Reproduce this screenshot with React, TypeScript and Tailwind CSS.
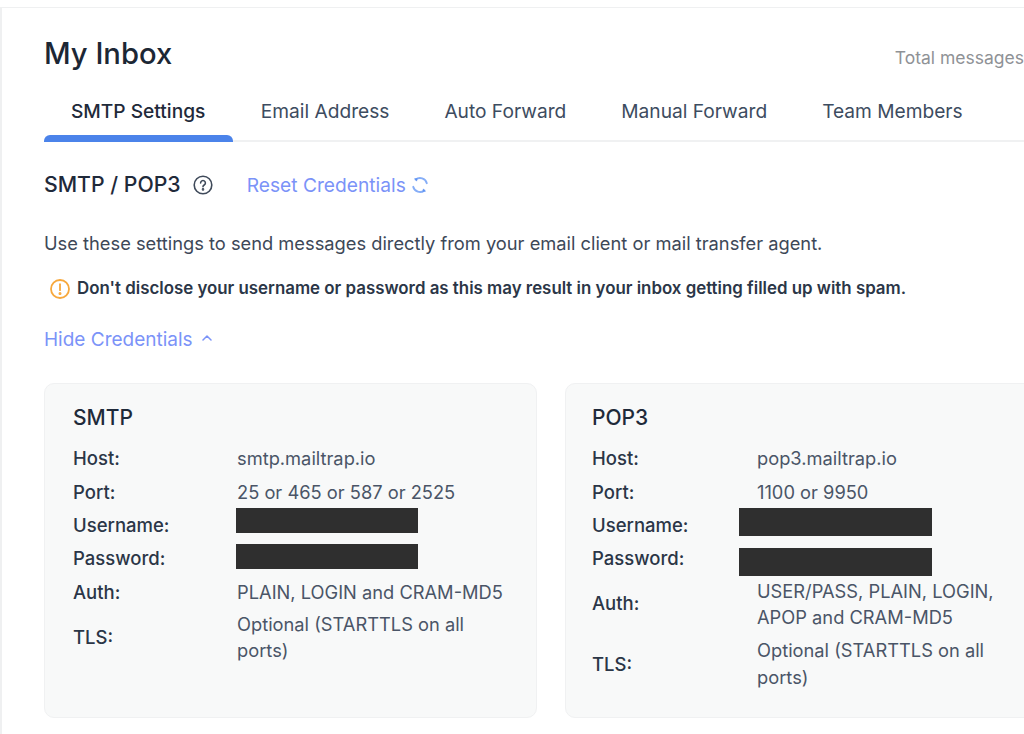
type Row = {
  label: string
  value?: string
  lines?: string[]
  lineClass?: string
  bar?: string
  h: string
}

const smtpRows: Row[] = [
  { label: 'Host:', value: 'smtp.mailtrap.io', h: 'h-[35px]' },
  { label: 'Port:', value: '25 or 465 or 587 or 2525', h: 'h-[33px]' },
  { label: 'Username:', bar: 'left-[163px] top-[-1px] h-[25px] w-[182px]', h: 'h-[33px]' },
  { label: 'Password:', bar: 'left-[163px] top-[2px] h-[25px] w-[182px]', h: 'h-[34px]' },
  { label: 'Auth:', value: 'PLAIN, LOGIN and CRAM-MD5', h: 'h-[33px]' },
  { label: 'TLS:', lines: ['Optional (STARTTLS on all', 'ports)'], lineClass: 'mb-[2px] leading-[26px]', h: 'h-[58px]' },
]

const popRows: Row[] = [
  { label: 'Host:', value: 'pop3.mailtrap.io', h: 'h-[35px]' },
  { label: 'Port:', value: '1100 or 9950', h: 'h-[33px]' },
  { label: 'Username:', bar: 'left-[147px] top-[-1px] h-[28px] w-[193px]', h: 'h-[33px]' },
  { label: 'Password:', bar: 'left-[147px] top-[6px] h-[28px] w-[193px]', h: 'h-[33px]' },
  { label: 'Auth:', lines: ['USER/PASS, PLAIN, LOGIN,', 'APOP and CRAM-MD5'], lineClass: 'leading-[26px]', h: 'h-[58px]' },
  { label: 'TLS:', lines: ['Optional (STARTTLS on all', 'ports)'], lineClass: 'mb-[1px] leading-[27px]', h: 'h-[63px]' },
]

const tabs = ['SMTP Settings', 'Email Address', 'Auto Forward', 'Manual Forward', 'Team Members']

function CredentialCard({ title, rows, className, labelClass }: { title: string; rows: Row[]; className: string; labelClass: string }) {
  return (
    <div className={'h-[335px] shrink-0 rounded-[10px] border border-[#f0f1f2] bg-[#f8f9f9] pt-[20px] ' + className}>
      <h3 className="text-[21px] leading-[28px] font-medium text-[#1f2a3a]">{title}</h3>
      <div className="mt-[9px] w-[440px]">
        {rows.map((row) => (
          <div key={row.label} className={'relative flex items-center text-[18.3px] ' + row.h}>
            <div className={'shrink-0 text-[18.5px] font-medium text-[#2b3647] ' + labelClass}>{row.label}</div>
            {row.value && <div className="text-[#4a5567]">{row.value}</div>}
            {row.lines && (
              <div className={'text-[#4a5567] ' + row.lineClass}>
                {row.lines.map((line) => (
                  <div key={line}>{line}</div>
                ))}
              </div>
            )}
            {row.bar && <div className={'absolute bg-[#2f2f2f] ' + row.bar} />}
          </div>
        ))}
      </div>
    </div>
  )
}

export default function App() {
  return (
    <div className="h-[734px] w-[1024px] overflow-hidden bg-white pt-[7px] font-['Inter',sans-serif]">
      <div className="h-full border-t border-l-2 border-[#eff0f1] pl-[42px]">
        {/* Title */}
        <div className="mt-[27px] flex h-[38px] items-center justify-between">
          <h1 className="text-[29.2px] leading-[38px] font-medium text-[#1c2735]">My Inbox</h1>
          <span className="mt-[8px] whitespace-nowrap text-[17.5px] leading-[26px] text-[#8f9296]">Total messages</span>
        </div>

        {/* Tabs */}
        <div className="mt-[17px] flex h-[52px] border-b-2 border-[#f0f1f2]">
          {tabs.map((tab, i) => (
            <div
              key={tab}
              className={
                'relative flex h-[52px] items-center whitespace-nowrap pb-[10px] text-[19.15px] ' +
                (i === 0 ? 'pl-[27px] pr-[28px] font-medium text-[#1f2a3a]' : 'px-[27.5px] text-[#3d4c60]')
              }
            >
              {tab}
              {i === 0 && <span className="absolute bottom-0 left-0 h-[7px] w-full rounded-t-[6px] bg-[#4b83ea]" />}
            </div>
          ))}
        </div>

        {/* SMTP / POP3 heading */}
        <div className="mt-[27px] flex h-[32px] items-center">
          <h2 className="text-[21.25px] font-medium text-[#1f2a3a]">SMTP / POP3</h2>
          <svg className="ml-[12px]" width="20" height="20" viewBox="0 0 20 20" fill="none" stroke="#3f4a5a" strokeWidth="1.6" strokeLinecap="round">
            <circle cx="10" cy="10" r="8.8" />
            <path d="M7.6 7.9a2.4 2.4 0 1 1 3.6 2.1c-.8.5-1.2.9-1.2 1.7" />
            <circle cx="10" cy="14.4" r=".5" fill="#3f4a5a" />
          </svg>
          <span className="ml-[34px] text-[19.2px] text-[#7b93f8]">Reset Credentials</span>
          <svg className="ml-[5px]" width="18" height="18" viewBox="0 0 18 18" fill="none" stroke="#86aef7" strokeWidth="1.9" strokeLinecap="round">
            <path d="M4.6 3.6A7 7 0 0 1 15.8 7.2" />
            <path d="M13.4 14.4A7 7 0 0 1 2.2 10.8" />
            <path d="M3 2.6l3.6-.4-.6 3.4z" fill="#5f93f2" stroke="none" />
            <path d="M15 15.4l-3.6.4.6-3.4z" fill="#5f93f2" stroke="none" />
          </svg>
        </div>

        <p className="mt-[29px] whitespace-nowrap text-[18.3px] leading-[26px] text-[#3d4858]">
          Use these settings to send messages directly from your email client or mail transfer agent.
        </p>

        <div className="mt-[20px] flex h-[26px] items-center">
          <svg className="ml-[6px]" width="20" height="20" viewBox="0 0 20 20" fill="none" stroke="#f7a83c" strokeWidth="1.8" strokeLinecap="round">
            <circle cx="10" cy="10" r="9" />
            <path d="M10 5.2v6" />
            <circle cx="10" cy="14.4" r=".6" fill="#f7a83c" />
          </svg>
          <span className="ml-[7px] whitespace-nowrap text-[16.87px] font-semibold text-[#2b3647]">
            Don't disclose your username or password as this may result in your inbox getting filled up with spam.
          </span>
        </div>

        <div className="mt-[25px] flex h-[26px] items-center">
          <span className="text-[19px] text-[#7b93f8]">Hide Credentials</span>
          <svg className="ml-[9px] mb-[4px]" width="10" height="6" viewBox="0 0 10 6" fill="none" stroke="#7b93f8" strokeWidth="1.5" strokeLinecap="round" strokeLinejoin="round">
            <path d="M1 5l4-4 4 4" />
          </svg>
        </div>

        {/* Credential cards */}
        <div className="mt-[30px] flex gap-[28px]">
          <CredentialCard title="SMTP" rows={smtpRows} className="w-[493px] pl-7" labelClass="w-[164px]" />
          <CredentialCard title="POP3" rows={popRows} className="w-[500px] pl-[26px]" labelClass="w-[165px]" />
        </div>
      </div>
    </div>
  )
}
